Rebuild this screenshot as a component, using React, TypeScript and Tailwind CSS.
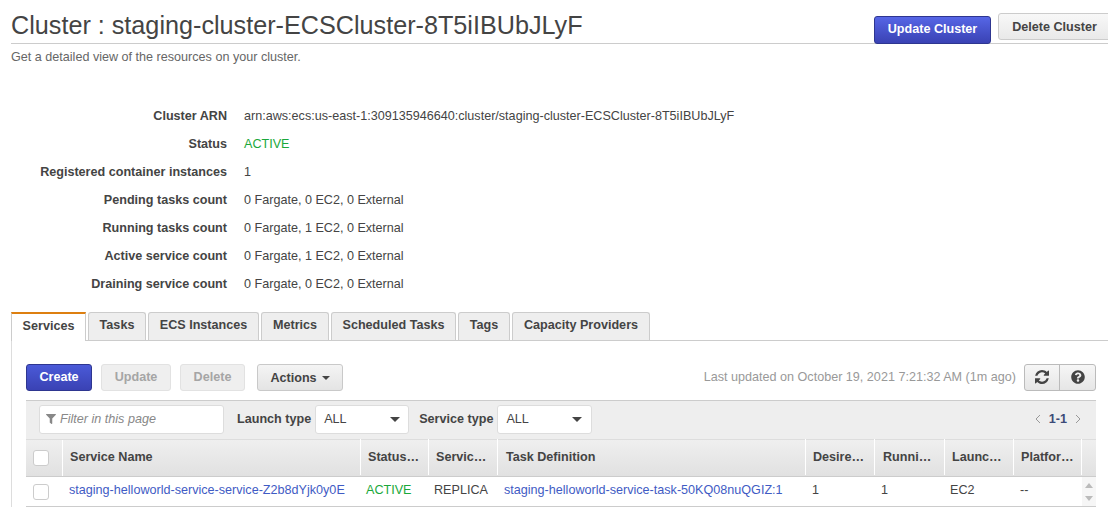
import React from "react";
import { FaQuestionCircle, FaFilter } from "react-icons/fa";

const Caret = ({ className = "" }: { className?: string }) => (
  <span className={"inline-block w-0 h-0 border-x-[4px] border-x-transparent border-t-[4px] border-t-[#444] " + className} />
);

const rows: [string, React.ReactNode][] = [
  ["Cluster ARN", "arn:aws:ecs:us-east-1:309135946640:cluster/staging-cluster-ECSCluster-8T5iIBUbJLyF"],
  ["Status", <span className="text-[#1aa83b]">ACTIVE</span>],
  ["Registered container instances", "1"],
  ["Pending tasks count", "0 Fargate, 0 EC2, 0 External"],
  ["Running tasks count", "0 Fargate, 1 EC2, 0 External"],
  ["Active service count", "0 Fargate, 1 EC2, 0 External"],
  ["Draining service count", "0 Fargate, 0 EC2, 0 External"],
];

const tabs: [string, string][] = [
  ["Tasks", "w-[58px]"],
  ["ECS Instances", "w-[111px]"],
  ["Metrics", "w-[68px]"],
  ["Scheduled Tasks", "w-[125px]"],
  ["Tags", "w-[52px]"],
  ["Capacity Providers", "w-[138px]"],
];

const heads: [string, string][] = [
  ["Service Name", "w-[298px] pl-[7px]"],
  ["Status…", "w-[68px] pl-[7px]"],
  ["Servic…", "w-[69px] pl-[7px]"],
  ["Task Definition", "w-[308px] pl-[8px]"],
  ["Desire…", "w-[69px] pl-[7px]"],
  ["Runni…", "w-[70px] pl-[8px]"],
  ["Launc…", "w-[69px] pl-[7px]"],
  ["Platfor…", "w-[68px] pl-[7px]"],
];

const grayBtn = "h-[27px] rounded-[3px] border border-[#c9c9c9] bg-gradient-to-b from-[#f4f4f4] to-[#e4e4e4] font-bold";

export default function App() {
  return (
    <div className="h-[517px] w-[1108px] overflow-hidden bg-white text-[12.6px] text-[#444] font-['Liberation_Sans',Arial,sans-serif]">
      <div className="ml-[11px] h-[44px] border-b border-[#ccc] flex justify-between">
        <h1 className="text-[25.2px] leading-[28px] pt-[11px] text-[#444] whitespace-nowrap">Cluster : staging-cluster-ECSCluster-8T5iIBUbJLyF</h1>
        <div className="flex items-start gap-[7px] pt-[13px] -mr-[2px]">
          <button className="mt-[3px] w-[117px] h-[28px] pb-[2px] rounded-[3px] border border-[#2e3690] bg-gradient-to-b from-[#5666e6] to-[#3a42b4] text-white font-bold">Update Cluster</button>
          <button className="w-[112px] h-[27px] pl-[1px] pt-[2px] rounded-l-[3px] border border-[#ccc] bg-gradient-to-b from-[#f8f8f8] to-[#e9e9e9] text-[#444] font-bold">Delete Cluster</button>
        </div>
      </div>
      <p className="ml-[11px] mt-[5px] leading-[16px] text-[#666]">Get a detailed view of the resources on your cluster.</p>

      <div className="mt-[37px]">
        {rows.map(([k, v]) => (
          <div key={k} className="h-[28px] flex items-center">
            <div className="w-[227px] text-right font-bold text-[#444]">{k}</div>
            <div className="ml-[17px] text-[#444] whitespace-nowrap">{v}</div>
          </div>
        ))}
      </div>

      <div className="ml-[11px] mt-[14px] h-[29px] flex items-end gap-[2px] border-b border-[#ccc]">
        <div className="w-[75px] h-[29px] pb-[3px] -mb-px border-x border-[#ccc] border-t-2 border-t-[#dd7f10] bg-white font-bold flex items-center justify-center">Services</div>
        {tabs.map(([t, w]) => (
          <div key={t} className={w + " h-[28px] pb-[2px] rounded-t-[3px] border border-b-0 border-[#ccc] bg-[#eee] font-bold flex items-center justify-center"}>{t}</div>
        ))}
      </div>

      <div className="ml-[11px] border-l border-[#ddd] pl-[14px] pr-[12px] pt-[23px]">
        <div className="flex items-center h-[27px]">
          <button className="w-[66px] h-[27px] rounded-[3px] border border-[#2e3690] bg-gradient-to-b from-[#4a5ad8] to-[#3a42b4] text-white font-bold">Create</button>
          <button className="ml-[9px] w-[70px] h-[27px] rounded-[3px] border border-[#e2e2e2] bg-[#efefef] text-[#a5a5a5] font-bold">Update</button>
          <button className="ml-[9px] w-[65px] h-[27px] rounded-[3px] border border-[#e2e2e2] bg-[#efefef] text-[#a5a5a5] font-bold">Delete</button>
          <button className={grayBtn + " ml-[12px] w-[86px] pt-[2px] text-[#444] flex items-center justify-center gap-[5px]"}>Actions <Caret className="-mt-[2px]" /></button>
          <span className="ml-auto text-[#999]">Last updated on October 19, 2021 7:21:32 AM (1m ago)</span>
          <div className="ml-[8px] w-[72px] flex h-[27px] rounded-[3px] border border-[#bbb] bg-gradient-to-b from-[#f6f6f6] to-[#e6e6e6]">
            <div className="w-[35px] border-r border-[#bbb] flex items-center justify-center pb-[2px]">
              <svg width="14" height="14" viewBox="128 128 1536 1536" fill="#444"><path d="M1639 1056q0 5-1 7-64 268-268 434.5t-478 166.5q-146 0-282.5-55t-243.5-157l-129 129q-19 19-45 19t-45-19-19-45v-448q0-26 19-45t45-19h448q26 0 45 19t19 45-19 45l-137 137q71 66 161 102t187 36q134 0 250-65t186-179q11-17 53-117 8-23 30-23h192q13 0 22.5 9.5t9.5 22.5zm25-800v448q0 26-19 45t-45 19h-448q-26 0-45-19t-19-45 19-45l138-138q-148-137-349-137-134 0-250 65t-186 179q-11 17-53 117-8 23-30 23h-199q-13 0-22.5-9.5t-9.5-22.5v-7q65-268 270-434.5t480-166.5q146 0 284 55.5t245 156.5l130-129q19-19 45-19t45 19 19 45z" /></svg>
            </div>
            <div className="flex-1 flex items-center justify-center pb-[2px]"><FaQuestionCircle className="w-[14px] h-[14px] text-[#444]" /></div>
          </div>
        </div>

        <div className="mt-[9px] h-[39px] pb-[1px] border-t border-[#ccc] bg-[#eee] flex items-center pl-[13px]">
          <div className="w-[185px] h-[29px] rounded-[3px] border border-[#ddd] bg-white flex items-center pl-[6px] gap-[4px]">
            <FaFilter className="w-[10px] h-[10px] text-[#888] -mt-[2px]" />
            <span className="italic text-[#888]">Filter in this page</span>
          </div>
          <span className="ml-[13px] font-bold">Launch type</span>
          <div className="ml-[4px] w-[94px] h-[29px] rounded-[3px] border border-[#ddd] bg-white flex items-center justify-between pl-[8px] pr-[8px]"><span>ALL</span><Caret className="border-x-[5px] border-t-[5px]" /></div>
          <span className="ml-[10px] font-bold">Service type</span>
          <div className="ml-[4px] w-[95px] h-[29px] rounded-[3px] border border-[#ddd] bg-white flex items-center justify-between pl-[8px] pr-[9px]"><span>ALL</span><Caret className="border-x-[5px] border-t-[5px]" /></div>
          <div className="ml-auto mr-[15px] flex items-center gap-[8px]">
            <svg width="6" height="10" viewBox="0 0 6 10" fill="none" stroke="#999"><path d="M5 1 1 5l4 4" /></svg>
            <span className="font-bold text-[#3c4a78]">1-1</span>
            <svg width="6" height="10" viewBox="0 0 6 10" fill="none" stroke="#999"><path d="m1 1 4 4-4 4" /></svg>
          </div>
        </div>

        <div className="h-[38px] flex border-t border-b border-[#ddd] border-b-[#ccc] bg-gradient-to-b from-[#efefef] to-[#e1e1e1] font-bold">
          <div className="w-[37px] border-r border-white flex items-center pl-[7px]"><span className="w-[16px] h-[16px] rounded-[3px] border border-[#ccc] bg-white" /></div>
          {heads.map(([h, w]) => (
            <div key={h} className={w + " border-r border-white flex items-center whitespace-nowrap -translate-y-px"}>{h}</div>
          ))}
          <div className="flex-1" />
        </div>

        <div className="h-[30px] pb-[2px] flex items-center border-b border-[#ccc]">
          <div className="w-[37px] pl-[7px] mt-[2px] flex"><span className="w-[16px] h-[16px] rounded-[3px] border border-[#ccc] bg-white" /></div>
          <div className="w-[298px] pl-[6px] text-[#3f5bc4] whitespace-nowrap">staging-helloworld-service-service-Z2b8dYjk0y0E</div>
          <div className="w-[68px] pl-[5px] text-[#1aa83b]">ACTIVE</div>
          <div className="w-[69px] pl-[5px]">REPLICA</div>
          <div className="w-[308px] pl-[6px] text-[#3f5bc4] whitespace-nowrap">staging-helloworld-service-task-50KQ08nuQGIZ:1</div>
          <div className="w-[69px] pl-[6px]">1</div>
          <div className="w-[70px] pl-[6px]">1</div>
          <div className="w-[69px] pl-[5px]">EC2</div>
          <div className="w-[68px] pl-[6px]">--</div>
          <div className="flex-1 self-stretch -mb-[2px] bg-[#f6f6f6] flex flex-col items-center justify-center gap-[8px]">
            <span className="w-0 h-0 border-x-[4px] border-x-transparent border-b-[5px] border-b-[#bbb]" />
            <span className="w-0 h-0 border-x-[4px] border-x-transparent border-t-[5px] border-t-[#bbb]" />
          </div>
        </div>
      </div>
    </div>
  );
}
